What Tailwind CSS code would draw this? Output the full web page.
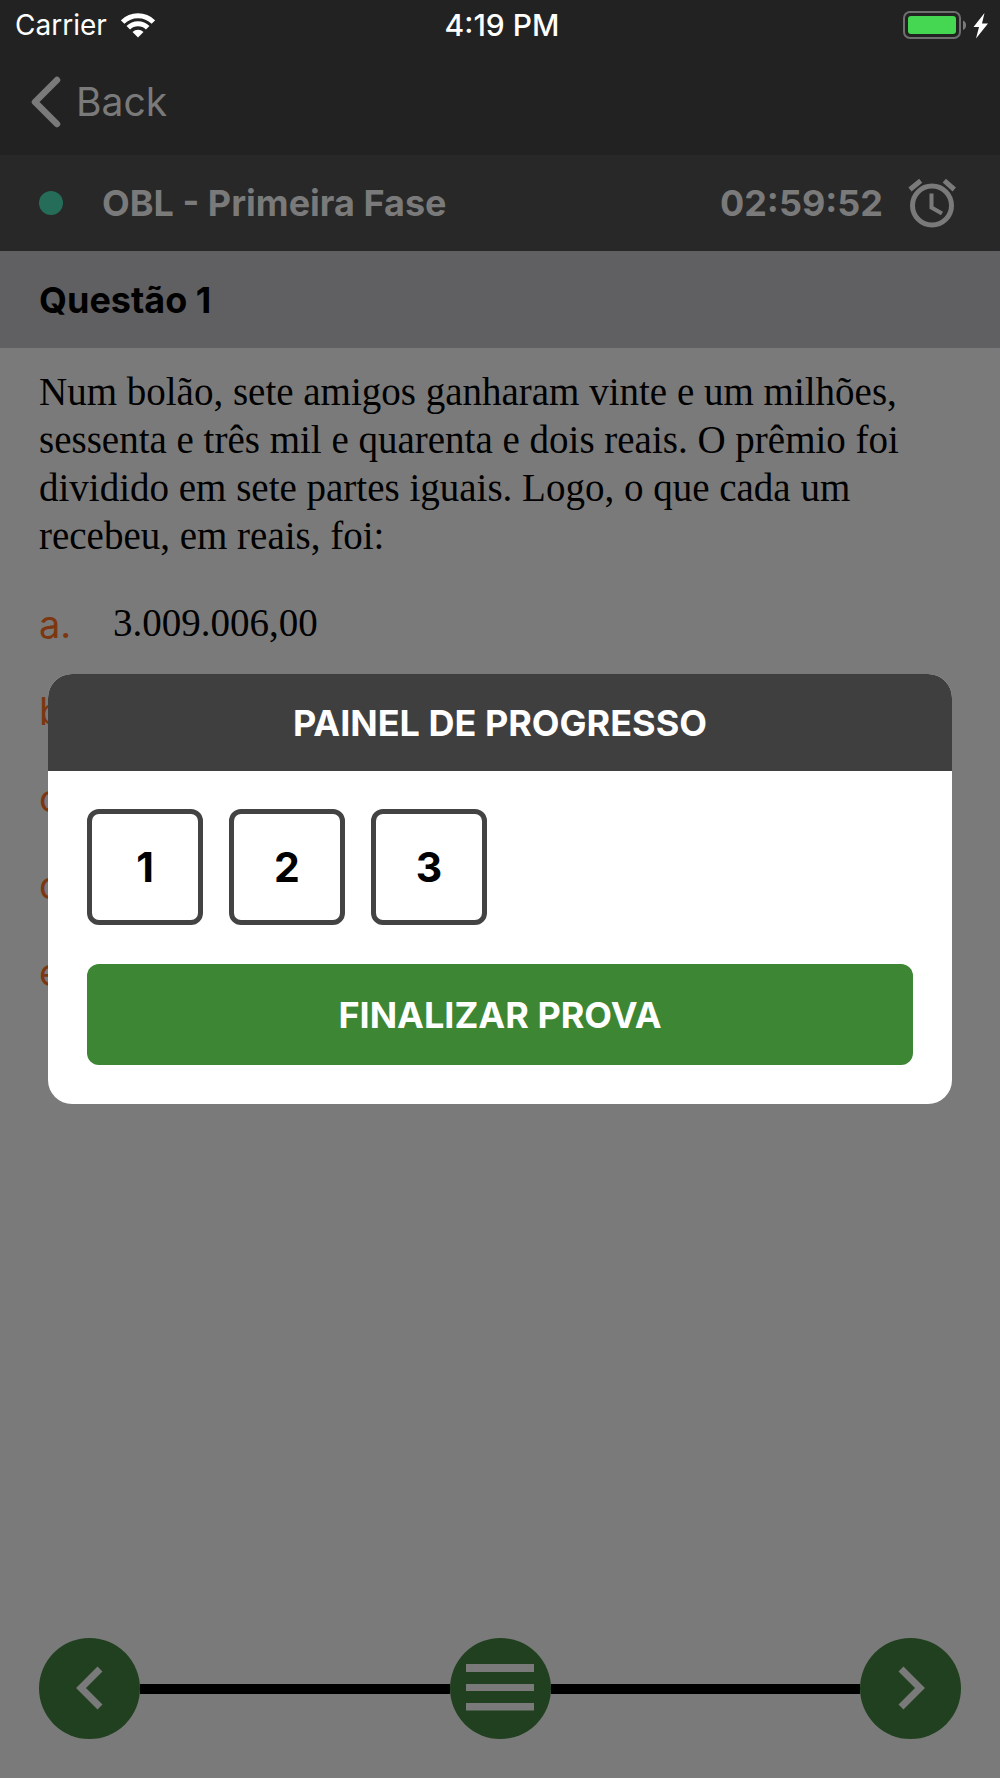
<!DOCTYPE html>
<html lang="pt-BR">
<head>
<meta charset="utf-8">
<meta name="viewport" content="width=device-width, initial-scale=1">
<title>OBL - Primeira Fase</title>
<script src="https://cdn.jsdelivr.net/npm/@tailwindcss/browser@4"></script>
</head>
<body class="relative flex min-h-screen flex-col bg-[#7a7a7a] font-['Inter',sans-serif] text-black">
  <header class="bg-[#222222]">
    <div class="grid h-[50px] grid-cols-3 items-center pr-[11px] pl-[15px] text-[28px] leading-[34px] text-white">
      <div class="flex items-center gap-3.5">
        <span>Carrier</span>
        <svg class="h-[25px] w-[34px]" viewBox="0 0 34 25" fill="none" aria-label="Wi-Fi">
          <path d="M1.600 9.100A21.800 21.800 0 0 1 32.400 9.100" stroke="#fff" stroke-width="5"/>
          <path d="M7.300 14.800A13.700 13.700 0 0 1 26.700 14.800" stroke="#fff" stroke-width="5"/>
          <path d="M17 24.500L11.500 19A8 8 0 0 1 22.500 19Z" fill="#fff"/>
        </svg>
      </div>
      <time class="text-center text-[30px] font-medium">4:19 PM</time>
      <div class="flex items-center justify-end">
        <svg class="h-7 w-[86px]" viewBox="0 0 86 28" aria-label="Bateria carregando">
          <rect x="1" y="1" width="56" height="26" rx="6" fill="none" stroke="#6f6f6f" stroke-width="2"/>
          <rect x="5" y="5" width="48" height="18" rx="3" fill="#45d752"/>
          <path d="M60 9.500Q63 10.500 63 14.200T60 19Z" fill="#7a7a7a"/>
          <path d="M81.500 2L70.500 16H76L73 27.500L85 12.500H79Z" fill="#fff"/>
        </svg>
      </div>
    </div>
    <nav class="flex h-[105px] items-center px-[30px] pb-0.5 text-[#7a7a7a]">
      <a href="#" class="flex items-center gap-[15px] text-[39px] leading-[48px]">
        <svg class="h-[52px] w-[31px]" viewBox="0 0 31 52" fill="none" stroke="currentColor" stroke-width="6.500" stroke-linecap="round" stroke-linejoin="round" aria-hidden="true"><path d="M27 4L5 26L27 48"/></svg>
        Back
      </a>
    </nav>
  </header>

  <section class="flex h-24 items-center bg-[#282828] px-[39px] text-[36px] leading-[44px] font-bold text-[#7a7a7a]">
    <span class="size-6 rounded-full bg-[#256d58]"></span>
    <h1 class="flex-1 pl-[39px]">OBL - Primeira Fase</h1>
    <time>02:59:52</time>
    <svg class="mr-[5px] ml-[25px] h-[50px] w-[48px]" viewBox="2 0 48 50" fill="none" stroke="currentColor" aria-hidden="true">
      <circle cx="26" cy="27.500" r="19.500" stroke-width="5"/>
      <path d="M4 11.500L14.700 2.700M48.300 11.500L38.300 2.700" stroke-width="5"/>
      <path d="M25.500 15.500V29.500L36 35.500" stroke-width="4"/>
    </svg>
  </section>

  <h2 class="flex h-[97px] items-center bg-[#606062] px-[39px] text-[36px] leading-[44px] font-bold">Questão 1</h2>

  <main class="flex-1 px-[39px] pt-5">
    <p class="font-['Liberation_Serif',serif] text-[39px] leading-[48px]">Num bolão, sete amigos ganharam vinte e um milhões, sessenta e três mil e quarenta e dois reais. O prêmio foi dividido em sete partes iguais. Logo, o que cada um recebeu, em reais, foi:</p>
    <ol class="pt-[21px] text-[38px] text-[#7c3711]">
      <li class="flex h-[87px] items-center"><span class="w-[74px]">a.</span><span class="pb-0.5 font-['Liberation_Serif',serif] text-[39px] text-black">3.009.006,00</span></li>
      <li class="flex h-[87px] items-center">b.</li>
      <li class="flex h-[87px] items-center">c.</li>
      <li class="flex h-[87px] items-center">d.</li>
      <li class="flex h-[87px] items-center">e.</li>
    </ol>
  </main>

  <footer class="flex items-center px-[39px] pb-[39px] text-[#7a7a7a]">
    <button type="button" aria-label="Questão anterior" class="flex size-[101px] items-center justify-center rounded-full bg-[#20401f] pb-0.5">
      <svg class="h-11 w-7" viewBox="0 0 28 44" fill="none" stroke="currentColor" stroke-width="7" aria-hidden="true"><path d="M24 3L5 22L24 41"/></svg>
    </button>
    <span class="h-2.5 flex-1 bg-black"></span>
    <button type="button" aria-label="Painel de progresso" class="flex size-[101px] items-center justify-center rounded-full bg-[#20401f] pb-0.5">
      <svg class="h-[47px] w-[68px]" viewBox="0 0 68 47" fill="currentColor" aria-hidden="true"><path d="M0 0H68V8H0ZM0 20H68V27H0ZM0 39H68V46.500H0Z"/></svg>
    </button>
    <span class="h-2.5 flex-1 bg-black"></span>
    <button type="button" aria-label="Próxima questão" class="flex size-[101px] items-center justify-center rounded-full bg-[#20401f] pb-0.5">
      <svg class="h-11 w-7" viewBox="0 0 28 44" fill="none" stroke="currentColor" stroke-width="7" aria-hidden="true"><path d="M4 3L23 22L4 41"/></svg>
    </button>
  </footer>

  <div class="absolute inset-0 flex items-center px-12">
    <div role="dialog" aria-modal="true" aria-labelledby="painel" class="w-full overflow-hidden rounded-3xl bg-white">
      <h2 id="painel" class="flex h-[97px] items-center justify-center bg-[#3f3f3f] text-[36px] leading-[44px] font-bold text-white">PAINEL DE PROGRESSO</h2>
      <div class="flex flex-col gap-[39px] px-[39px] pt-[38px] pb-[39px]">
        <div class="flex flex-wrap gap-[26px] text-[41px] leading-[50px] font-bold">
          <button type="button" class="size-[116px] rounded-xl border-5 border-[#434343]">1</button>
          <button type="button" class="size-[116px] rounded-xl border-5 border-[#434343]">2</button>
          <button type="button" class="size-[116px] rounded-xl border-5 border-[#434343]">3</button>
        </div>
        <button type="button" class="h-[101px] rounded-xl bg-[#3c8634] text-[36px] leading-[44px] font-bold text-white">FINALIZAR PROVA</button>
      </div>
    </div>
  </div>
</body>
</html>
